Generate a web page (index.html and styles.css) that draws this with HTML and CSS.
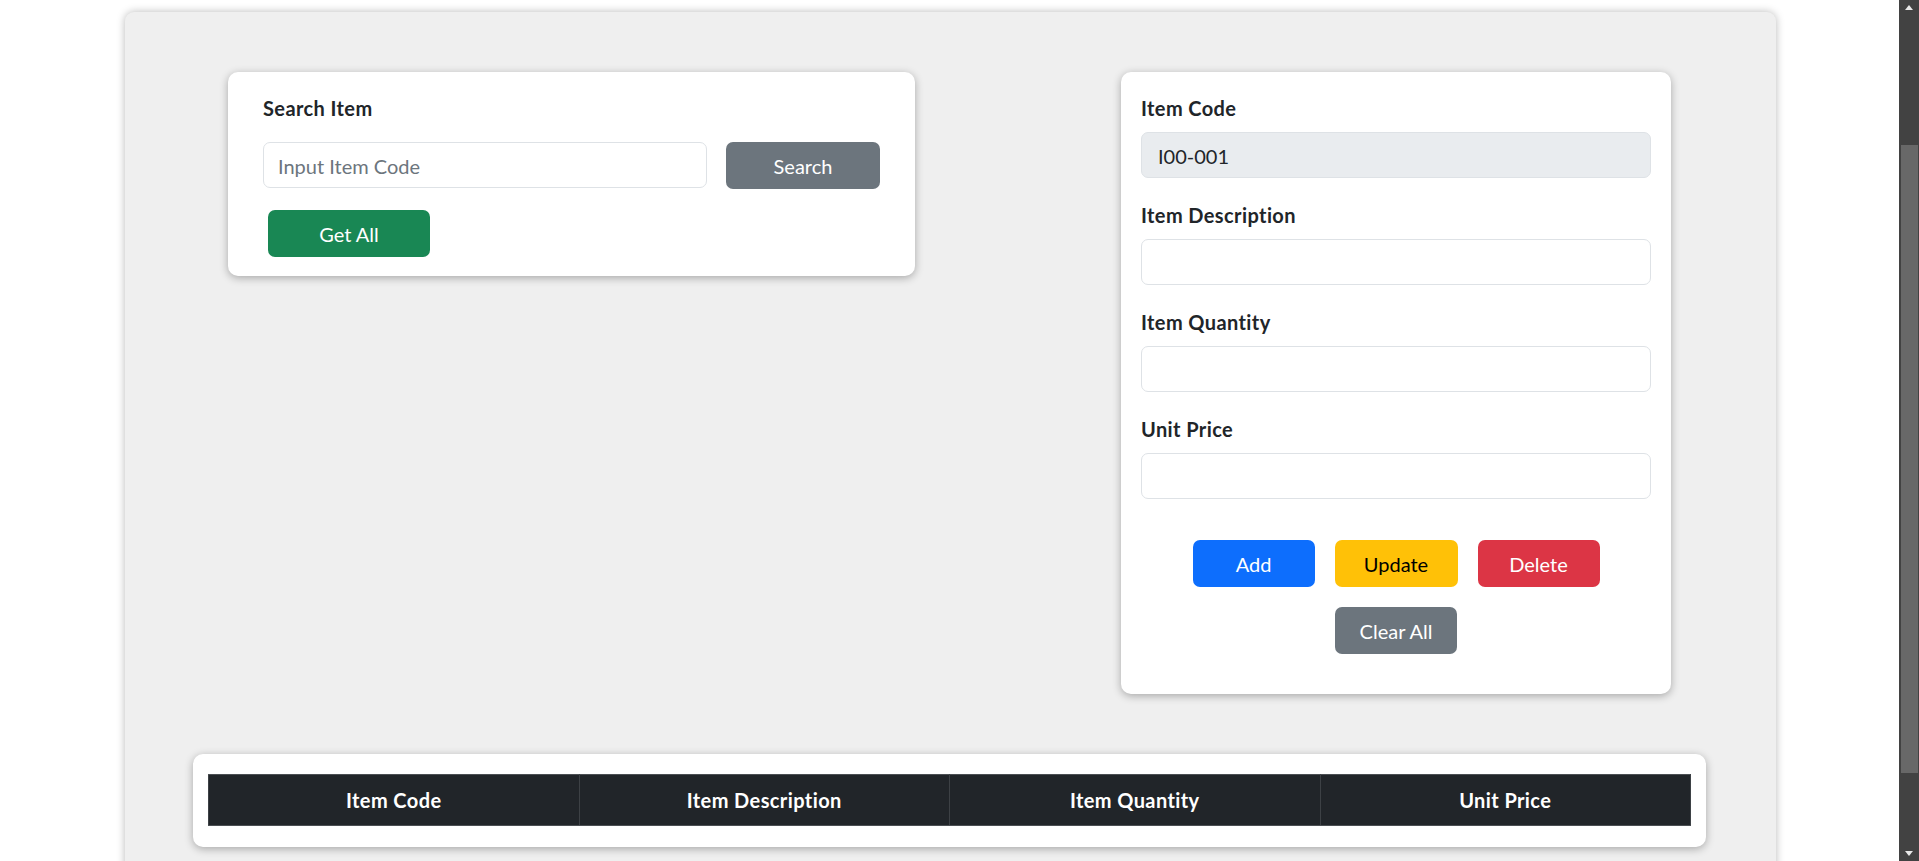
FILE: index.html
```html
<!DOCTYPE html>
<html lang="en">
<head>
<meta charset="utf-8">
<title>Item Management</title>
<link rel="stylesheet" href="styles.css">
</head>
<body>
<div class="page">
  <main class="panel">
    <div class="top-row">
      <section class="card search-card">
        <h5 class="card-title">Search Item</h5>
        <div class="search-row">
          <input class="field" type="text" placeholder="Input Item Code">
          <button class="btn btn-gray btn-search">Search</button>
        </div>
        <button class="btn btn-green btn-getall">Get All</button>
      </section>

      <section class="card form-card">
        <div class="group">
          <label class="label">Item Code</label>
          <input class="field field-disabled" type="text" value="I00-001" disabled>
        </div>
        <div class="group">
          <label class="label">Item Description</label>
          <input class="field" type="text">
        </div>
        <div class="group">
          <label class="label">Item Quantity</label>
          <input class="field" type="text">
        </div>
        <div class="group">
          <label class="label">Unit Price</label>
          <input class="field" type="text">
        </div>
        <div class="actions">
          <div class="btn-row">
            <button class="btn btn-blue btn-action">Add</button>
            <button class="btn btn-yellow btn-action">Update</button>
            <button class="btn btn-red btn-action">Delete</button>
          </div>
          <div class="btn-row">
            <button class="btn btn-gray btn-action">Clear All</button>
          </div>
        </div>
      </section>
    </div>

    <section class="card table-card">
      <table class="items">
        <thead>
          <tr>
            <th>Item Code</th>
            <th>Item Description</th>
            <th>Item Quantity</th>
            <th>Unit Price</th>
          </tr>
        </thead>
        <tbody></tbody>
      </table>
    </section>
  </main>

  <div class="scrollbar">
    <span class="arrow arrow-up"></span>
    <span class="thumb"></span>
    <span class="arrow arrow-down"></span>
  </div>
</div>
</body>
</html>
```

FILE: styles.css
```css
* {
  box-sizing: border-box;
}

html, body {
  margin: 0;
  padding: 0;
  background: #ffffff;
  overflow: hidden;
}

body {
  font-family: "Segoe UI", Lato, "Noto Sans", sans-serif;
  font-size: 20px;
  line-height: 30px;
  color: #212529;
}

.page {
  width: 1901px;
  height: 861px;
  overflow: hidden;
}

.panel {
  width: 1651px;
  margin: 12px auto 0;
  padding: 60px 0 60px;
  background: #efefef;
  border-radius: 9px;
  box-shadow: 0 0 8px rgba(0, 0, 0, 0.28);
}

.top-row {
  display: flex;
  justify-content: space-between;
  align-items: flex-start;
  padding: 0 105px 0 103px;
}

.card {
  background: #ffffff;
  border-radius: 10px;
  box-shadow: 0 2px 8px rgba(0, 0, 0, 0.3);
}

/* Search card */
.search-card {
  width: 687px;
  padding: 21px 35px 19px 35px;
}

.card-title {
  margin: 0 0 19px;
  font-size: 20px;
  line-height: 30px;
  font-weight: 700;
  letter-spacing: 0.4px;
}

.search-row {
  display: flex;
  gap: 19px;
  margin-bottom: 21px;
}

.search-row .field {
  flex: 1;
}

.field {
  display: block;
  width: 100%;
  height: 46px;
  padding: 8px 14px 6px;
  font-family: inherit;
  font-size: 20px;
  line-height: 30px;
  color: #212529;
  background: #ffffff;
  border: 1px solid #dee2e6;
  border-radius: 7px;
  outline: none;
}

.field::placeholder {
  color: #6c757d;
}

.field-disabled {
  background: #e9ecef;
  color: #212529;
  -webkit-text-fill-color: #212529;
  padding-left: 16px;
}

.btn {
  display: inline-flex;
  align-items: center;
  justify-content: center;
  height: 47px;
  padding: 1px 0 0;
  font-family: inherit;
  font-size: 20px;
  line-height: 30px;
  font-weight: 400;
  border: none;
  border-radius: 7px;
  color: #ffffff;
  cursor: pointer;
}

.btn-search {
  width: 154px;
}

.btn-getall {
  width: 162px;
  margin-left: 5px;
}

.btn-gray { background: #6c757d; }
.btn-green { background: #198754; }
.btn-blue { background: #0d6efd; }
.btn-yellow { background: #ffc107; color: #000000; }
.btn-red { background: #dc3545; }

/* Form card */
.form-card {
  width: 550px;
  padding: 21px 20px 40px;
}

.group {
  margin-bottom: 22px;
}

.label {
  display: block;
  margin-bottom: 9px;
  font-weight: 700;
  line-height: 30px;
  letter-spacing: 0.4px;
}

.actions {
  display: flex;
  flex-direction: column;
  align-items: center;
  gap: 20px;
  padding-top: 19px;
}

.btn-row {
  display: flex;
  justify-content: center;
  gap: 20px;
}

.btn-action {
  width: 122px;
}

.btn-yellow.btn-action {
  width: 123px;
}

/* Table card */
.table-card {
  margin: 60px 70px 0 68px;
  padding: 20px 15px 21px;
}

.items {
  width: 100%;
  border-collapse: collapse;
  table-layout: fixed;
}

.items th {
  height: 51px;
  padding: 10px;
  background: #212529;
  color: #ffffff;
  font-weight: 700;
  font-size: 20px;
  line-height: 30px;
  letter-spacing: 0.4px;
  text-align: center;
  border-top: 1px solid #4b4f53;
  border-bottom: 1px solid #4b4f53;
  border-left: 1px solid #3d4145;
  border-right: 1px solid #3d4145;
}

/* Scrollbar drawn over the right edge */
.scrollbar {
  position: fixed;
  top: 0;
  right: 0;
  width: 20px;
  height: 861px;
  background: #424242;
}

.thumb {
  position: absolute;
  top: 145px;
  left: 2px;
  right: 1px;
  height: 628px;
  background: #686868;
}

.arrow {
  position: absolute;
  left: 6px;
  width: 0;
  height: 0;
  border-left: 4.5px solid transparent;
  border-right: 4.5px solid transparent;
}

.arrow-up {
  top: 5px;
  border-bottom: 5px solid #e8e8e8;
}

.arrow-down {
  bottom: 5px;
  border-top: 5px solid #e8e8e8;
}
```
